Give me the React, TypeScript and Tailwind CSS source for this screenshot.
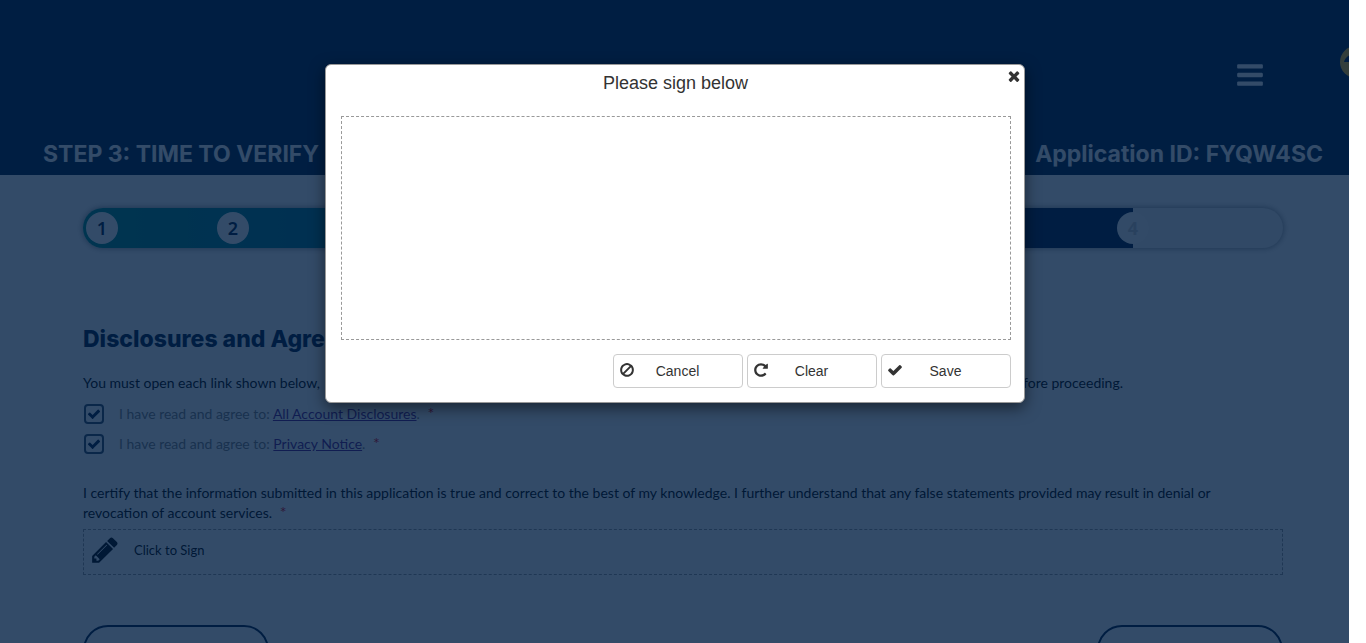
import type { ReactNode } from "react";

const ICONS = {
  times:
    "M1490 1322q0 40-28 68l-136 136q-28 28-68 28t-68-28l-294-294-294 294q-28 28-68 28t-68-28l-136-136q-28-28-28-68t28-68l294-294-294-294q-28-28-28-68t28-68l136-136q28-28 68-28t68 28l294 294 294-294q28-28 68-28t68 28l136 136q28 28 28 68t-28 68l-294 294 294 294q28 28 28 68z",
  check:
    "M1671 566q0 40-28 68l-724 724-136 136q-28 28-68 28t-68-28l-136-136-362-362q-28-28-28-68t28-68l136-136q28-28 68-28t68 28l294 295 656-657q28-28 68-28t68 28l136 136q28 28 28 68z",
  ban: "M1440 893q0-161-87-295l-754 753q137 89 297 89 111 0 211.5-43.5t173.5-116.5 116-174.5 43-212.5zm-999 299l755-754q-135-91-300-91-148 0-273 73t-198 199-73 274q0 162 89 299zm1223-299q0 157-61 300t-163.5 246-245 164-298.5 61-298.5-61-245-164-163.5-246-61-300 61-299.5 163.5-245.5 245-164 298.5-61 298.5 61 245 164 163.5 245.5 61 299.5z",
  repeat:
    "M1664 256v448q0 26-19 45t-45 19h-448q-42 0-59-40-17-39 14-69l138-138q-148-137-349-137-104 0-198.5 40.5t-163.5 109.5-109.5 163.5-40.5 198.5 40.5 198.5 109.5 163.5 163.5 109.5 198.5 40.5q119 0 225-52t179-147q7-10 23-12 15 0 25 9l137 138q9 8 9.5 20.5t-7.5 22.5q-109 132-264 204.5t-327 72.5q-156 0-298-61t-245-164-164-245-61-298 61-298 164-245 245-164 298-61q147 0 284.5 55.5t244.5 156.5l130-129q29-31 70-14 39 17 39 59z",
  bars: "M1664 1344v128q0 26-19 45t-45 19h-1408q-26 0-45-19t-19-45v-128q0-26 19-45t45-19h1408q26 0 45 19t19 45zm0-512v128q0 26-19 45t-45 19h-1408q-26 0-45-19t-19-45v-128q0-26 19-45t45-19h1408q26 0 45 19t19 45zm0-512v128q0 26-19 45t-45 19h-1408q-26 0-45-19t-19-45v-128q0-26 19-45t45-19h1408q26 0 45 19t19 45z",
  pencil:
    "M491 1536l91-91-235-235-91 91v107h128v128h107zm523-928q0-22-22-22-10 0-17 7l-542 542q-7 7-7 17 0 22 22 22 10 0 17-7l542-542q7-7 7-17zm-54-192l416 416-832 832h-416v-416zm683 96q0 53-37 90l-166 166-416-416 166-165q36-38 90-38 53 0 91 38l235 234q37 39 37 91z",
};

function Icon({ name, className }: { name: keyof typeof ICONS; className: string }) {
  return (
    <svg viewBox="0 0 1792 1792" fill="currentColor" aria-hidden="true" className={className}>
      <path d={ICONS[name]} />
    </svg>
  );
}

function Step({ children }: { children: ReactNode }) {
  return (
    <span className="flex size-8 shrink-0 items-center justify-center rounded-full bg-white font-['Noto_Sans',sans-serif] text-lg leading-8 font-semibold text-[#001d41]">
      {children}
    </span>
  );
}

function Required() {
  return <span className="ml-1 text-base leading-none text-red-600">*</span>;
}

function Agreement({ id, link }: { id: string; link: string }) {
  return (
    <div className="flex h-[30px] items-center gap-[15px] pl-px">
      <span className="relative flex size-5">
        <input
          id={id}
          type="checkbox"
          defaultChecked
          className="size-5 appearance-none rounded border-2 border-[#334a67]"
        />
        <Icon name="check" className="pointer-events-none absolute top-[3px] left-[3px] size-[14px] text-[#001d41]" />
      </span>
      <label htmlFor={id} className="leading-5 text-[#7f7f7f]">
        I have read and agree to:{" "}
        <a href="#" className="text-[#551a8b] underline">
          {link}
        </a>
        . <Required />
      </label>
    </div>
  );
}

function DialogButton({ icon, children }: { icon: keyof typeof ICONS; children: ReactNode }) {
  return (
    <button
      type="button"
      className="relative h-[34px] w-[130px] rounded border border-[#ccc] bg-white text-sm text-[#333]"
    >
      <Icon name={icon} className="absolute top-[7px] left-[5px] size-4" />
      {children}
    </button>
  );
}

export default function App() {
  return (
    <div className="flex h-screen overflow-hidden bg-white">
      <div className="relative flex-1 overflow-hidden font-['Lato',sans-serif] text-sm text-black">
        <header className="relative flex h-[175px] flex-col justify-between overflow-hidden bg-[#001e42] pr-[26px] pb-[7px] pl-[43px] font-['Inter',sans-serif] text-white">
          <div className="flex justify-end pt-[60px] pr-[58px]">
            <button type="button" aria-label="Menu">
              <Icon name="bars" className="size-[30px]" />
            </button>
          </div>
          <svg viewBox="0 0 32 32" aria-hidden="true" className="absolute top-[46px] -right-[23px] size-8">
            <circle cx="16" cy="16" r="16" fill="#ffbf20" />
            <path d="M4 16C5 11 10 8 16 8s11 3 12 8z" fill="#001d41" />
          </svg>
          <div className="flex justify-between text-[23px] leading-7 font-bold">
            <h1>STEP 3: TIME TO VERIFY</h1>
            <p>Application ID: FYQW4SC</p>
          </div>
        </header>

        <main className="pt-[33px] pr-[66px] pl-[83px]">
          <div className="flex h-10 overflow-hidden rounded-full bg-[#f2f2f2] shadow-[0_0_6px_rgba(0,0,0,0.5)]">
            <div className="flex w-[1050px] shrink-0 items-center bg-linear-to-r from-[#008f85] via-[#007090] via-30% to-[#001d41] to-75% pl-[3px]">
              <Step>1</Step>
              <span className="w-[99px]" />
              <Step>2</Step>
            </div>
            <div className="-ml-4 flex items-center">
              <span className="flex size-8 items-center justify-center rounded-full bg-[#f8f8f8] font-['Noto_Sans',sans-serif] text-lg leading-8 font-bold text-[#ccc]">
                4
              </span>
            </div>
          </div>

          <h2 className="mt-[77px] font-['Inter',sans-serif] text-[23px] leading-7 font-extrabold text-[#001d41]">
            Disclosures and Agreements
          </h2>
          <p className="mt-5 flex w-[1040px] max-w-full justify-between leading-5">
            <span>You must open each link shown below,</span>
            <span>before proceeding.</span>
          </p>
          <div className="mt-[6px]">
            <Agreement id="disclosures" link="All Account Disclosures" />
            <Agreement id="privacy" link="Privacy Notice" />
          </div>
          <p className="mt-6 pr-10 leading-5">
            I certify that the information submitted in this application is true and correct to the best of my
            knowledge. I further understand that any false statements provided may result in denial or revocation of
            account services. <Required />
          </p>
          <button
            type="button"
            className="mt-[6px] flex h-[46px] w-full items-center gap-[14px] border border-dashed border-[#999] pb-1 pl-[6px] text-[13px]"
          >
            <Icon name="pencil" className="size-[30px]" />
            <span>Click to Sign</span>
          </button>
          <div className="mt-[50px] flex justify-between text-[#001d41]">
            <button
              type="button"
              aria-label="Back"
              className="h-[50px] w-[186px] rounded-full border-2 border-[#001d41]"
            />
            <button
              type="button"
              aria-label="Submit"
              className="h-[50px] w-[186px] rounded-full border-2 border-[#001d41]"
            />
          </div>
        </main>

        <div className="absolute inset-0 flex items-start justify-center bg-[#001e42]/80 pt-16">
          <div
            role="dialog"
            aria-modal="true"
            aria-labelledby="sign-title"
            className="relative w-[700px] rounded-md border border-[#999] bg-white pt-[5px] pr-[13px] pb-[14px] pl-[15px] font-['Liberation_Sans',Arial,sans-serif] text-[#333] shadow-[0_5px_15px_rgba(0,0,0,0.5)]"
          >
            <h2 id="sign-title" className="text-center text-lg leading-[26px]">
              Please sign below
            </h2>
            <button type="button" aria-label="Close" className="absolute top-[3px] right-[2px]">
              <Icon name="times" className="size-4" />
            </button>
            <div className="mt-5 h-[224px] border border-dashed border-[#999]" />
            <div className="mt-[14px] flex justify-end gap-1">
              <DialogButton icon="ban">Cancel</DialogButton>
              <DialogButton icon="repeat">Clear</DialogButton>
              <DialogButton icon="check">Save</DialogButton>
            </div>
          </div>
        </div>
      </div>
      <div className="w-[17px] shrink-0 bg-white" />
    </div>
  );
}
